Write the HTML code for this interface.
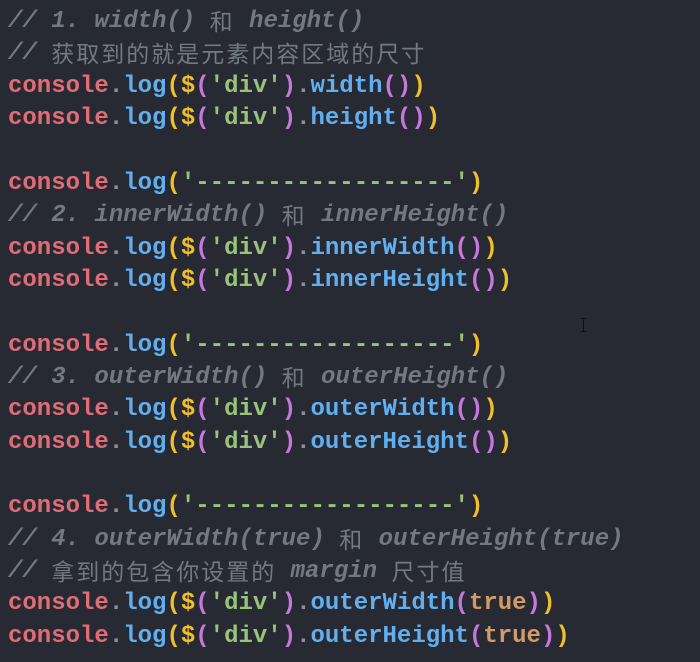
<!DOCTYPE html>
<html><head><meta charset="utf-8"><style>
html,body{margin:0;padding:0}
body{width:700px;height:662px;background:#282a33;overflow:hidden;position:relative}
#w{position:absolute;left:8px;top:6px;font-family:"Liberation Mono","Noto Sans CJK SC",monospace;font-weight:bold;font-size:24px;color:#abb2bf}
#w div{height:32.37px;line-height:32px;overflow:visible;white-space:pre}
.c{color:#737983;font-style:italic}
.z{font-family:"Noto Sans CJK SC",sans-serif;font-weight:normal;letter-spacing:2px;font-style:normal;line-height:1;display:inline-block;vertical-align:top;margin-top:3px;font-size:23px}
.k{color:#e06c75}.l{color:#61afef}.y{color:#f0c02a}.p{color:#c678dd}.s{color:#98c379}.d{color:#8b8f96}.t{color:#d19a66}
.cur{position:absolute;left:583px;top:318px;width:1px;height:14px;background:#0e0f12}
.cur:before,.cur:after{content:"";position:absolute;left:-2px;width:5px;height:1px;background:#0e0f12}
.cur:before{top:0}.cur:after{bottom:0}
</style></head><body>
<div id="w">
<div><span class="c">// 1. width() <span class="z">和</span> height()</span></div>
<div><span class="c">// <span class="z">获取到的就是元素内容区域的尺寸</span></span></div>
<div><span class="k">console</span><span class="d">.</span><span class="l">log</span><span class="y">(</span><span class="y">$</span><span class="p">(</span><span class="s">'div'</span><span class="p">)</span><span class="d">.</span><span class="l">width</span><span class="p">()</span><span class="y">)</span></div>
<div><span class="k">console</span><span class="d">.</span><span class="l">log</span><span class="y">(</span><span class="y">$</span><span class="p">(</span><span class="s">'div'</span><span class="p">)</span><span class="d">.</span><span class="l">height</span><span class="p">()</span><span class="y">)</span></div>
<div> </div>
<div><span class="k">console</span><span class="d">.</span><span class="l">log</span><span class="y">(</span><span class="s">'------------------'</span><span class="y">)</span></div>
<div><span class="c">// 2. innerWidth() <span class="z">和</span> innerHeight()</span></div>
<div><span class="k">console</span><span class="d">.</span><span class="l">log</span><span class="y">(</span><span class="y">$</span><span class="p">(</span><span class="s">'div'</span><span class="p">)</span><span class="d">.</span><span class="l">innerWidth</span><span class="p">()</span><span class="y">)</span></div>
<div><span class="k">console</span><span class="d">.</span><span class="l">log</span><span class="y">(</span><span class="y">$</span><span class="p">(</span><span class="s">'div'</span><span class="p">)</span><span class="d">.</span><span class="l">innerHeight</span><span class="p">()</span><span class="y">)</span></div>
<div> </div>
<div><span class="k">console</span><span class="d">.</span><span class="l">log</span><span class="y">(</span><span class="s">'------------------'</span><span class="y">)</span></div>
<div><span class="c">// 3. outerWidth() <span class="z">和</span> outerHeight()</span></div>
<div><span class="k">console</span><span class="d">.</span><span class="l">log</span><span class="y">(</span><span class="y">$</span><span class="p">(</span><span class="s">'div'</span><span class="p">)</span><span class="d">.</span><span class="l">outerWidth</span><span class="p">()</span><span class="y">)</span></div>
<div><span class="k">console</span><span class="d">.</span><span class="l">log</span><span class="y">(</span><span class="y">$</span><span class="p">(</span><span class="s">'div'</span><span class="p">)</span><span class="d">.</span><span class="l">outerHeight</span><span class="p">()</span><span class="y">)</span></div>
<div> </div>
<div><span class="k">console</span><span class="d">.</span><span class="l">log</span><span class="y">(</span><span class="s">'------------------'</span><span class="y">)</span></div>
<div><span class="c">// 4. outerWidth(true) <span class="z">和</span> outerHeight(true)</span></div>
<div><span class="c">// <span class="z">拿到的包含你设置的</span> margin <span class="z">尺寸值</span></span></div>
<div><span class="k">console</span><span class="d">.</span><span class="l">log</span><span class="y">(</span><span class="y">$</span><span class="p">(</span><span class="s">'div'</span><span class="p">)</span><span class="d">.</span><span class="l">outerWidth</span><span class="p">(</span><span class="t">true</span><span class="p">)</span><span class="y">)</span></div>
<div><span class="k">console</span><span class="d">.</span><span class="l">log</span><span class="y">(</span><span class="y">$</span><span class="p">(</span><span class="s">'div'</span><span class="p">)</span><span class="d">.</span><span class="l">outerHeight</span><span class="p">(</span><span class="t">true</span><span class="p">)</span><span class="y">)</span></div>
</div>
<div class="cur"></div>
</body></html>
